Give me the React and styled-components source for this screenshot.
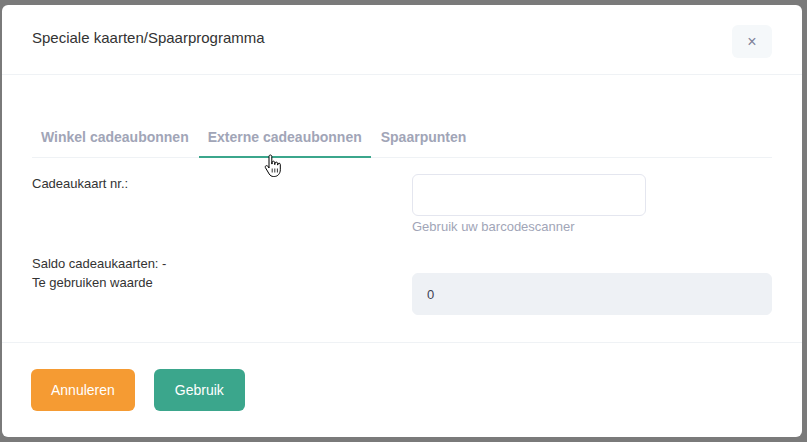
import React from "react";
import styled, { createGlobalStyle } from "styled-components";

const Global = createGlobalStyle`
  html, body { margin: 0; padding: 0; }
  body {
    background: #7a7a7a;
    font-family: "Liberation Sans", Arial, sans-serif;
    color: #3f4254;
  }
  * { box-sizing: border-box; }
`;

const Backdrop = styled.div`
  width: 807px;
  height: 442px;
  padding: 5px 5px 5px 2px;
`;

const Modal = styled.div`
  position: relative;
  width: 800px;
  height: 432px;
  background: #ffffff;
  border-radius: 6px;
  display: flex;
  flex-direction: column;
`;

const Header = styled.div`
  display: flex;
  justify-content: space-between;
  align-items: flex-start;
  padding: 20px 30px 16px 30px;
  border-bottom: 1px solid #eff2f5;
`;

const Title = styled.h5`
  margin: 2px 0 0 0;
  font-size: 15px;
  line-height: 21px;
  font-weight: 400;
  color: #333333;
`;

const CloseButton = styled.button`
  width: 40px;
  height: 33px;
  border: none;
  border-radius: 6px;
  background: #f5f8fa;
  color: #7e8299;
  font-size: 16px;
  font-family: "Liberation Sans", Arial, sans-serif;
  display: flex;
  align-items: center;
  justify-content: center;
  padding: 0;
`;

const Body = styled.div`
  flex: 1;
  padding: 43px 30px 0 30px;
  border-bottom: 1px solid #eff2f5;
`;

const TabList = styled.div`
  display: flex;
  gap: 1px;
  border-bottom: 1px solid #eff2f5;
`;

const Tab = styled.div`
  padding: 11px 9px 10px 9px;
  font-size: 14px;
  line-height: 17px;
  font-weight: 700;
  color: #a1a5b7;
  margin-bottom: -1px;
  border-bottom: 2px solid ${(p) => (p.$active ? "#3ba68c" : "transparent")};
`;

const Row = styled.div`
  display: grid;
  grid-template-columns: 380px 360px;
  margin-top: ${(p) => p.$top || 0}px;
`;

const Label = styled.div`
  font-size: 13px;
  line-height: 19px;
  color: #333333;
`;

const InputWrap = styled.div`
  display: flex;
  flex-direction: column;
`;

const Input = styled.input`
  width: ${(p) => p.$w || "100%"};
  height: 42px;
  border: 1px solid ${(p) => (p.disabled ? "#eef1f5" : "#e4e6ef")};
  background: ${(p) => (p.disabled ? "#eef1f5" : "#ffffff")};
  border-radius: 6px;
  padding: 0 14px;
  font-size: 13px;
  font-family: "Liberation Sans", Arial, sans-serif;
  color: #3f4254;
  outline: none;
`;

const Help = styled.div`
  margin-top: 3px;
  font-size: 13px;
  line-height: 16px;
  color: #a1a5b7;
`;

const Saldo = styled.div`
  margin-top: 19px;
  font-size: 13px;
  line-height: 19px;
  color: #333333;
`;

const Footer = styled.div`
  display: flex;
  gap: 19px;
  padding: 26px 30px 26px 29px;
`;

const Button = styled.button`
  height: 42px;
  padding: 0 ${(p) => p.$px || 20}px;
  border: none;
  border-radius: 6px;
  background: ${(p) => p.$bg};
  color: #ffffff;
  font-size: 14px;
  font-family: "Liberation Sans", Arial, sans-serif;
`;

const Cursor = styled.svg`
  position: absolute;
  left: 262px;
  top: 149px;
`;

export default function App() {
  return (
    <>
      <Global />
      <Backdrop>
        <Modal>
          <Header>
            <Title>Speciale kaarten/Spaarprogramma</Title>
            <CloseButton>×</CloseButton>
          </Header>
          <Body>
            <TabList>
              <Tab>Winkel cadeaubonnen</Tab>
              <Tab $active>Externe cadeaubonnen</Tab>
              <Tab>Spaarpunten</Tab>
            </TabList>
            <Row $top={16}>
              <Label>Cadeaukaart nr.:</Label>
              <InputWrap>
                <Input $w="234px" />
                <Help>Gebruik uw barcodescanner</Help>
              </InputWrap>
            </Row>
            <Saldo>Saldo cadeaukaarten: -</Saldo>
            <Row>
              <Label>Te gebruiken waarde</Label>
              <InputWrap>
                <Input disabled value="0" readOnly />
              </InputWrap>
            </Row>
          </Body>
          <Footer>
            <Button $bg="#f59b33" $px={20}>Annuleren</Button>
            <Button $bg="#3ba68c" $px={21}>Gebruik</Button>
          </Footer>
          <Cursor width="18" height="24" viewBox="0 0 18 24">
            <path
              d="M5 2.5c0-.9.6-1.5 1.4-1.5s1.4.6 1.4 1.5V10h.3V8.6c0-.8.6-1.4 1.3-1.4s1.3.6 1.3 1.4V10.5h.3V9.4c0-.8.6-1.3 1.3-1.3s1.3.5 1.3 1.3v1.6h.3v-.6c0-.7.5-1.2 1.2-1.2s1.2.5 1.2 1.2v5.4c0 3.6-2.4 6.7-6 6.7H9.5c-2 0-3.3-1-4.3-2.5L1.5 13.8c-.5-.8-.3-1.6.4-2 .7-.4 1.5-.2 2 .5L5 14V2.5z"
              fill="#ffffff"
              stroke="#000000"
              strokeWidth="1"
              strokeLinejoin="round"
            />
            <path d="M8.2 14.5v4M10.8 14.5v4M13.4 14.5v4" stroke="#000" strokeWidth="0.8" />
          </Cursor>
        </Modal>
      </Backdrop>
    </>
  );
}
